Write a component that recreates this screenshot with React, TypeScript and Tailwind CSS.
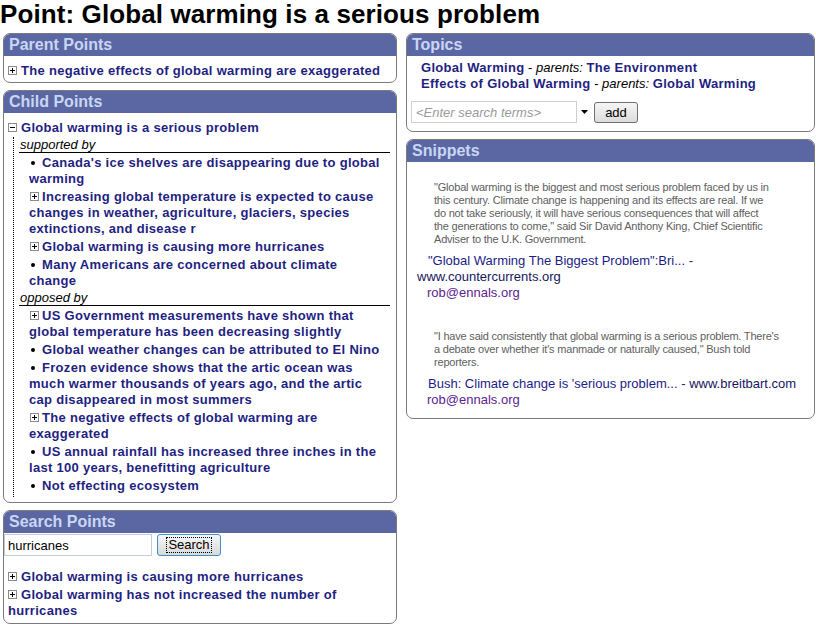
import type { ReactNode } from "react";

type Item = { kind: "bullet" | "plus"; text: string };

const supported: Item[] = [
  { kind: "bullet", text: "Canada's ice shelves are disappearing due to global warming" },
  {
    kind: "plus",
    text: "Increasing global temperature is expected to cause changes in weather, agriculture, glaciers, species extinctions, and disease r",
  },
  { kind: "plus", text: "Global warming is causing more hurricanes" },
  { kind: "bullet", text: "Many Americans are concerned about climate change" },
];

const opposed: Item[] = [
  {
    kind: "plus",
    text: "US Government measurements have shown that global temperature has been decreasing slightly",
  },
  { kind: "bullet", text: "Global weather changes can be attributed to El Nino" },
  {
    kind: "bullet",
    text: "Frozen evidence shows that the artic ocean was much warmer thousands of years ago, and the artic cap disappeared in most summers",
  },
  { kind: "plus", text: "The negative effects of global warming are exaggerated" },
  {
    kind: "bullet",
    text: "US annual rainfall has increased three inches in the last 100 years, benefitting agriculture",
  },
  { kind: "bullet", text: "Not effecting ecosystem" },
];

// little tree toggle, the windows style [+] / [-]
const Toggle = ({ open = false, className = "" }: { open?: boolean; className?: string }) => (
  <svg width="9" height="9" viewBox="0 0 9 9" className={"inline-block align-[-0px] " + className}>
    <rect x="0.5" y="0.5" width="8" height="8" fill="#fff" stroke="#8a8a8a" />
    <path d="M2 4.5h5" stroke="#000" />
    {!open && <path d="M4.5 2v5" stroke="#000" />}
  </svg>
);

const Box = ({ title, children }: { title: string; children: ReactNode }) => (
  <div className="overflow-hidden rounded-[7px] border border-[#7b7b7b] bg-white">
    <div className="h-[22px] bg-[#5b67a3] pl-[5px] text-[16px] font-bold leading-[22px] text-[#c9d6f4]">
      {title}
    </div>
    {children}
  </div>
);

const PointLink = ({ children, open = false }: { children: ReactNode; open?: boolean }) => (
  <div className="pl-[4px] text-[13px] font-bold leading-[16px] tracking-[0.3px] text-[#1f1f82]">
    <Toggle open={open} className="mr-[4px]" />
    {children}
  </div>
);

const ChildItem = ({ item }: { item: Item }) => (
  <div className="mt-[2px] mr-[16px] pl-[15px] text-[13px] font-bold leading-[16px] tracking-[0.3px] text-[#1f1f82]">
    {item.kind === "bullet" ? (
      <span className="ml-[2px] mr-[7px] inline-block h-[4px] w-[4px] rounded-full bg-black align-[2px]" />
    ) : (
      <Toggle className="ml-[1px] mr-[3px]" />
    )}
    {item.text}
  </div>
);

const Heading = ({ label, first = false }: { label: string; first?: boolean }) => (
  <div
    className={`${first ? "" : "mt-[1px]"} ml-[5px] mr-[6px] border-b border-black pl-[1px] text-[13px] italic leading-[15px] text-black`}
  >
    {label}
  </div>
);

export default function App() {
  return (
    <div className="min-h-[625px] w-[816px] bg-white font-['Liberation_Sans',Arial,sans-serif] text-black">
      <h1 className="h-[33px] text-[26px] font-bold leading-[29px] tracking-[0.1px]">
        Point: Global warming is a serious problem
      </h1>

      <div className="flex gap-[9px] pl-[3px]">
        {/* left column */}
        <div className="flex w-[394px] flex-col gap-[7px]">
          <Box title="Parent Points">
            <div className="pt-[7px] pb-[3px]">
              <PointLink>The negative effects of global warming are exaggerated</PointLink>
            </div>
          </Box>

          <Box title="Child Points">
            <div className="pt-[7px] pb-[5px]">
              <PointLink open>Global warming is a serious problem</PointLink>
              <div className="mt-[1px] ml-[9px] border-l border-dotted border-black pb-[3px]">
                <Heading label="supported by" first />
                {supported.map((it) => (
                  <ChildItem key={it.text} item={it} />
                ))}
                <Heading label="opposed by" />
                {opposed.map((it) => (
                  <ChildItem key={it.text} item={it} />
                ))}
              </div>
            </div>
          </Box>

          <Box title="Search Points">
            <div className="pt-[1px] pb-[4px]">
              <div className="flex items-center gap-[5px]">
                <input
                  readOnly
                  value="hurricanes"
                  className="h-[22px] w-[148px] border border-[#c5ccd8] px-[3px] text-[13px] text-black outline-none"
                />
                <button className="flex h-[22px] w-[64px] items-center justify-center rounded-[3px] border border-[#3d8fc7] bg-gradient-to-b from-[#f7f7f7] to-[#d9d9d9] text-[13px] text-black">
                  <span className="border border-dotted border-black px-[1px] leading-[14px]">Search</span>
                </button>
              </div>
              <div className="mt-[13px]">
                <PointLink>Global warming is causing more hurricanes</PointLink>
                <div className="mt-[2px]">
                  <PointLink>Global warming has not increased the number of hurricanes</PointLink>
                </div>
              </div>
            </div>
          </Box>
        </div>

        {/* right column */}
        <div className="flex w-[409px] flex-col gap-[7px]">
          <Box title="Topics">
            <div className="pt-[4px] pb-[8px]">
              <div className="pl-[14px] text-[13px] leading-[16px]">
                <div>
                  <span className="font-bold tracking-[0.3px] text-[#1f1f82]">Global Warming</span> -{" "}
                  <span className="italic">parents:</span>{" "}
                  <span className="font-bold tracking-[0.3px] text-[#1f1f82]">The Environment</span>
                </div>
                <div>
                  <span className="font-bold tracking-[0.3px] text-[#1f1f82]">Effects of Global Warming</span> -{" "}
                  <span className="italic">parents:</span>{" "}
                  <span className="font-bold tracking-[0.3px] text-[#1f1f82]">Global Warming</span>
                </div>
              </div>
              <div className="mt-[9px] flex items-center pl-[4px]">
                <input
                  readOnly
                  placeholder="<Enter search terms>"
                  className="h-[22px] w-[166px] border border-[#cfcfcf] px-[4px] text-[13px] outline-none placeholder:italic placeholder:text-[#9a9a9a]"
                />
                <svg width="7" height="4" viewBox="0 0 7 4" className="ml-[4px]">
                  <path d="M0 0h7L3.5 4z" fill="#000" />
                </svg>
                <button className="ml-[6px] h-[21px] w-[44px] rounded-[3px] border border-[#707070] bg-gradient-to-b from-[#f6f6f6] to-[#dcdcdc] text-[13px] leading-[19px] text-black">
                  add
                </button>
              </div>
            </div>
          </Box>

          <Box title="Snippets">
            <div className="pb-[10px]">
              <p className="mt-[19px] ml-[27px] mr-[41px] text-[11px] leading-[13px] tracking-[-0.2px] text-[#5e5e5e]">
                "Global warming is the biggest and most serious problem faced by us in this century. Climate change is
                happening and its effects are real. If we do not take seriously, it will have serious consequences that
                will affect the generations to come," said Sir David Anthony King, Chief Scientific Adviser to the U.K.
                Government.
              </p>
              <div className="mt-[7px] pl-[10px] indent-[11px] text-[13px] leading-[16px] text-[#1c1c86]">
                "Global Warming The Biggest Problem":Bri... - <span className="text-[#16165e]">www.countercurrents.org</span>
              </div>
              <div className="pl-[20px] text-[13px] leading-[16px] text-[#5c2390]">rob@ennals.org</div>

              <p className="mt-[29px] ml-[27px] mr-[28px] text-[11px] leading-[13px] tracking-[-0.2px] text-[#5e5e5e]">
                "I have said consistently that global warming is a serious problem. There's a debate over whether it's
                manmade or naturally caused," Bush told reporters.
              </p>
              <div className="mt-[7px] pl-[10px] indent-[11px] text-[13px] leading-[16px] text-[#1c1c86]">
                Bush: Climate change is 'serious problem... - <span className="text-[#16165e]">www.breitbart.com</span>
              </div>
              <div className="pl-[20px] text-[13px] leading-[16px] text-[#5c2390]">rob@ennals.org</div>
            </div>
          </Box>
        </div>
      </div>
    </div>
  );
}
